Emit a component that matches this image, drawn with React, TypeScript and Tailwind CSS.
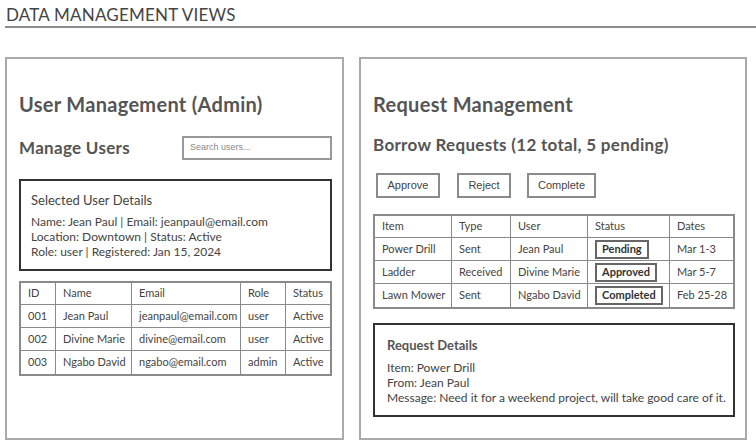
const comic = { fontFamily: 'Lato, "Noto Sans", sans-serif' };

const users = [
  { id: "001", name: "Jean Paul", email: "jeanpaul@email.com", role: "user", status: "Active" },
  { id: "002", name: "Divine Marie", email: "divine@email.com", role: "user", status: "Active" },
  { id: "003", name: "Ngabo David", email: "ngabo@email.com", role: "admin", status: "Active" },
];

const requests = [
  { item: "Power Drill", type: "Sent", user: "Jean Paul", status: "Pending", dates: "Mar 1-3" },
  { item: "Ladder", type: "Received", user: "Divine Marie", status: "Approved", dates: "Mar 5-7" },
  { item: "Lawn Mower", type: "Sent", user: "Ngabo David", status: "Completed", dates: "Feb 25-28" },
];

function Cell({ children, w, last }: { children: React.ReactNode; w: string; last?: boolean }) {
  return (
    <div
      className={`${w} flex items-center px-[7px] whitespace-nowrap overflow-hidden ${last ? "" : "border-r border-[#8a8a8a]"}`}
    >
      {children}
    </div>
  );
}

function UserTable() {
  const cols = ["w-[35px]", "w-[76px]", "w-[109px]", "w-[45px]", "flex-1"];
  const head = ["ID", "Name", "Email", "Role", "Status"];
  return (
    <div className="border-2 border-[#8a8a8a] text-[11px] text-[#444]" style={comic}>
      <div className="flex h-[22px] border-b border-[#8a8a8a]">
        {head.map((h, i) => (
          <Cell key={h} w={cols[i]} last={i === 4}>
            {h}
          </Cell>
        ))}
      </div>
      {users.map((u, r) => (
        <div key={u.id} className={`flex h-[23px] ${r < 2 ? "border-b border-[#8a8a8a]" : ""}`}>
          <Cell w={cols[0]}>{u.id}</Cell>
          <Cell w={cols[1]}>{u.name}</Cell>
          <Cell w={cols[2]}>{u.email}</Cell>
          <Cell w={cols[3]}>{u.role}</Cell>
          <Cell w={cols[4]} last>
            {u.status}
          </Cell>
        </div>
      ))}
    </div>
  );
}

function RequestTable() {
  const cols = ["w-[77px]", "w-[59px]", "w-[77px]", "w-[82px]", "flex-1"];
  const head = ["Item", "Type", "User", "Status", "Dates"];
  return (
    <div className="border-2 border-[#8a8a8a] text-[11px] text-[#444]" style={comic}>
      <div className="flex h-[22px] border-b border-[#8a8a8a]">
        {head.map((h, i) => (
          <Cell key={h} w={cols[i]} last={i === 4}>
            {h}
          </Cell>
        ))}
      </div>
      {requests.map((q, r) => (
        <div key={q.item} className={`flex h-[23px] ${r < 2 ? "border-b border-[#8a8a8a]" : ""}`}>
          <Cell w={cols[0]}>{q.item}</Cell>
          <Cell w={cols[1]}>{q.type}</Cell>
          <Cell w={cols[2]}>{q.user}</Cell>
          <Cell w={cols[3]}>
            <span className="border-2 border-[#666] px-[5px] h-[19px] flex items-center font-bold text-[#333]">
              {q.status}
            </span>
          </Cell>
          <Cell w={cols[4]} last>
            {q.dates}
          </Cell>
        </div>
      ))}
    </div>
  );
}

function Button({ label, w }: { label: string; w: string }) {
  return (
    <div
      className={`${w} h-[25px] border-2 border-[#8a8a8a] flex items-center justify-center text-[11px] text-[#444]`}
      style={{ fontFamily: '"Liberation Sans", Arial, sans-serif' }}
    >
      {label}
    </div>
  );
}

export default function App() {
  return (
    <div className="w-[756px] h-[443px] bg-white overflow-hidden text-[#444]" style={comic}>
      {/* Header */}
      <div className="pl-[5px]">
        <div className="h-[26px] pt-[2px] pl-[1px] text-[17px] tracking-[0.2px] text-[#444]">
          DATA MANAGEMENT VIEWS
        </div>
        <div className="h-[2px] bg-[#8c8c8c]" />
      </div>

      <div className="flex gap-[15px] pl-[5px] mt-[29px]">
        {/* Left panel */}
        <div className="w-[339px] h-[383px] border-2 border-[#aaaaaa] pl-[12px] pr-[10px]">
          <div className="mt-[32px] h-[26px] flex items-center text-[20px] font-bold text-[#555] tracking-[0.3px]">
            User Management (Admin)
          </div>
          <div className="mt-[19px] flex items-center justify-between h-[24px]">
            <div className="text-[17px] font-bold text-[#555] tracking-[0.3px]">Manage Users</div>
            <div
              className="w-[150px] h-[24px] border-2 border-[#999] flex items-center pl-[6px] text-[9px] text-[#888]"
              style={{ fontFamily: '"Liberation Sans", Arial, sans-serif' }}
            >
              Search users...
            </div>
          </div>
          <div className="mt-[19px] h-[92px] border-2 border-[#333] pl-[10px] pt-[11px] text-[#444]">
            <div className="text-[13px] leading-[16px]">Selected User Details</div>
            <div className="mt-[6px] text-[12px] leading-[15px]">
              <div>Name: Jean Paul | Email: jeanpaul@email.com</div>
              <div>Location: Downtown | Status: Active</div>
              <div>Role: user | Registered: Jan 15, 2024</div>
            </div>
          </div>
          <div className="mt-[10px]">
            <UserTable />
          </div>
        </div>

        {/* Right panel */}
        <div className="w-[388px] h-[383px] border-2 border-[#aaaaaa] pl-[12px] pr-[10px]">
          <div className="mt-[32px] h-[26px] flex items-center text-[20px] font-bold text-[#555] tracking-[0.3px]">
            Request Management
          </div>
          <div className="mt-[16px] h-[24px] flex items-center text-[17px] font-bold text-[#555] tracking-[0.3px]">
            Borrow Requests (12 total, 5 pending)
          </div>
          <div className="mt-[16px] flex gap-[17px] pl-[3px]">
            <Button label="Approve" w="w-[64px]" />
            <Button label="Reject" w="w-[54px]" />
            <div className="-ml-[1px]">
              <Button label="Complete" w="w-[69px]" />
            </div>
          </div>
          <div className="mt-[16px]">
            <RequestTable />
          </div>
          <div className="mt-[14px] h-[94px] border-2 border-[#333] pl-[12px] pt-[12px] text-[#444]">
            <div className="text-[13px] leading-[16px] font-bold text-[#555]">Request Details</div>
            <div className="mt-[7px] text-[12px] leading-[15px]">
              <div>Item: Power Drill</div>
              <div>From: Jean Paul</div>
              <div>Message: Need it for a weekend project, will take good care of it.</div>
            </div>
          </div>
        </div>
      </div>
    </div>
  );
}
